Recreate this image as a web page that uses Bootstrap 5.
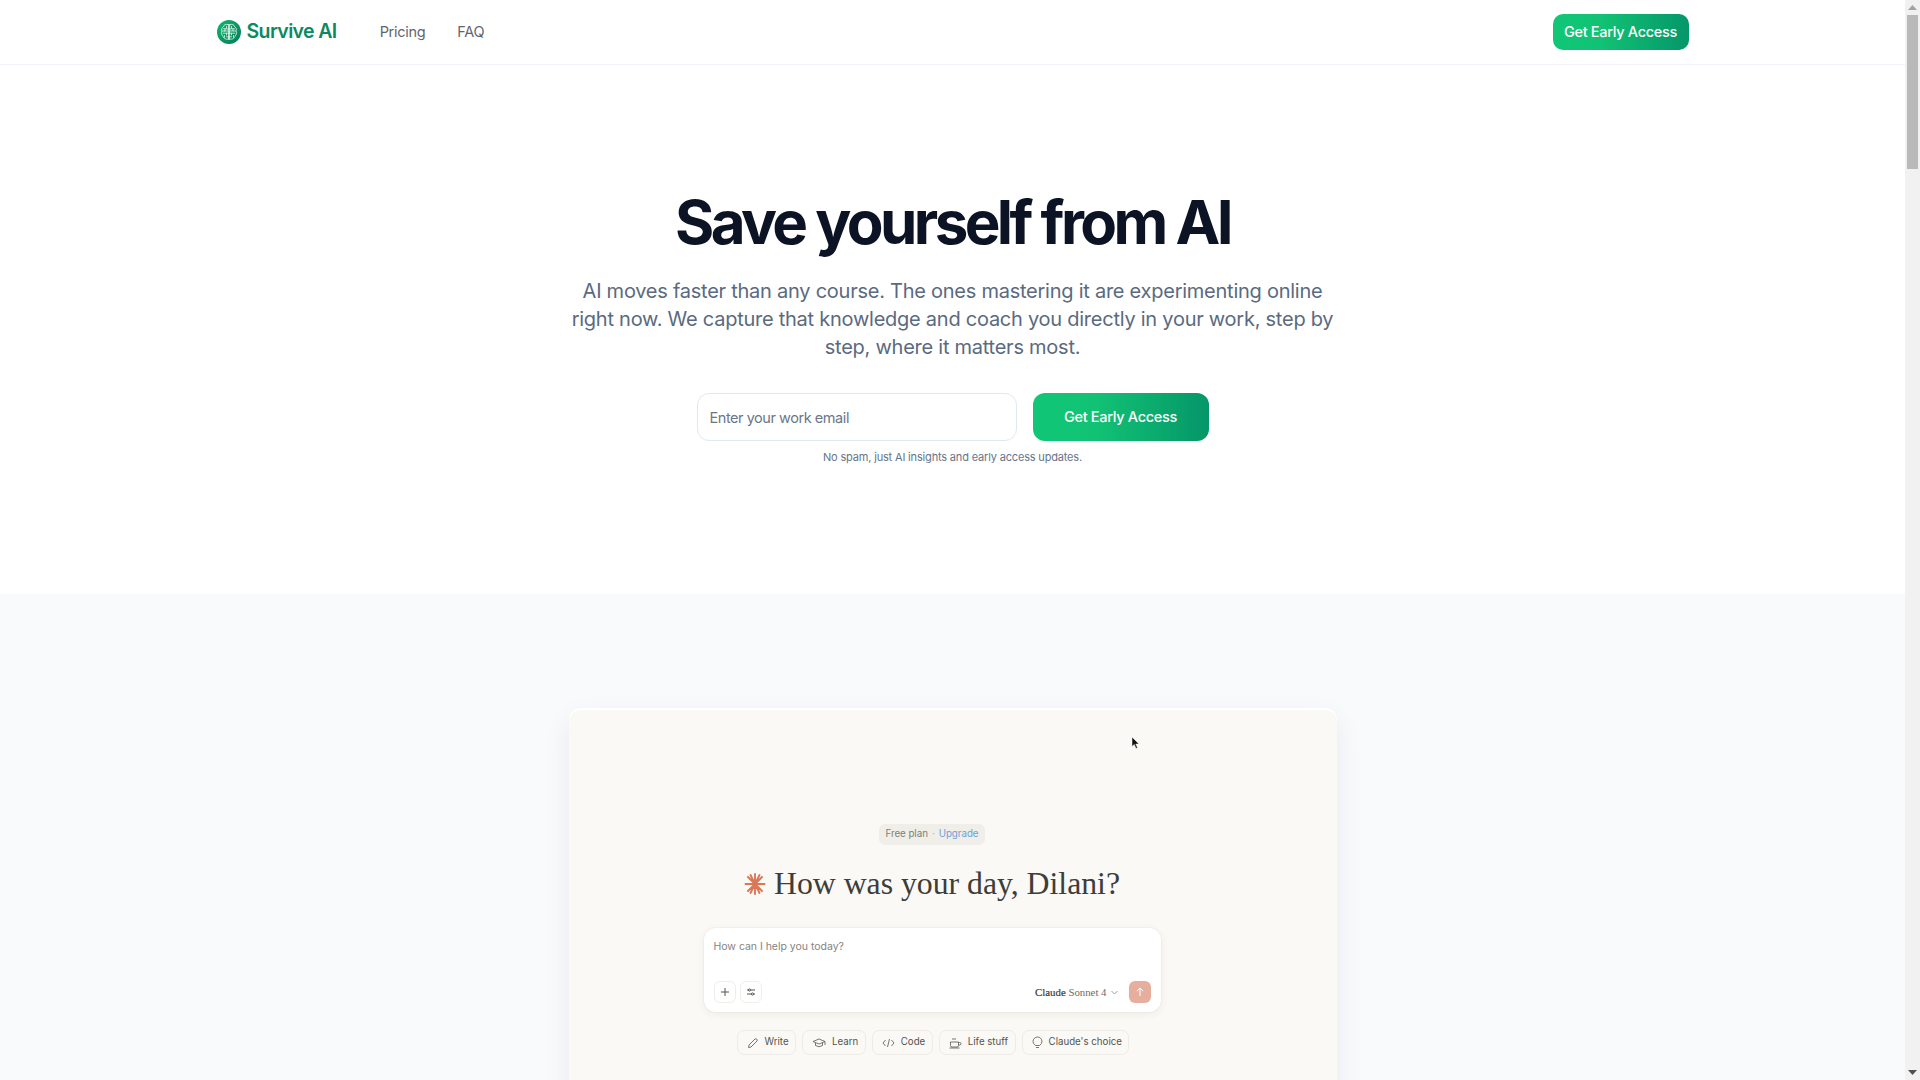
<!DOCTYPE html>
<html lang="en">
<head>
<meta charset="utf-8">
<title>Survive AI</title>
<link href="https://cdn.jsdelivr.net/npm/bootstrap@5.3.0/dist/css/bootstrap.min.css" rel="stylesheet">
<style>
body{font-family:Inter,"Liberation Sans",sans-serif;color:#0f172a;background:#fff;padding-right:15px}
.rail{position:fixed;top:0;right:0;bottom:0;width:15px;background:#f1f1f1;z-index:10}
.rail-thumb{width:11px;height:154px;margin:0 auto;background:#b9b9b9}
.rail-end{height:15px}
.topbar{height:65px;border-bottom:1px solid #f1f5f9;background:#fff;padding:0}
.topbar-in{max-width:1536px;padding:0 32px;margin:0 auto;width:100%;height:64px}
.brand-wrap{gap:6px}
.brand-name{font-size:19.5px;font-weight:600;color:#0b8a60;letter-spacing:-.62px}
.nav-lnk{font-size:14.5px;color:#5f6672;text-decoration:none;letter-spacing:-.3px}
.grad-btn{background:linear-gradient(90deg,#10c777 0%,#12c274 35%,#059669 100%);color:#fff;border:0;font-weight:450;letter-spacing:-.3px;font-size:14.5px;padding:0}
.grad-btn:hover{color:#fff}
.btn-top{height:36px;width:136px;border-radius:10px}
.hero{height:529px;padding-top:124px}
.hero-title{font-size:60px;font-weight:700;line-height:1.1;letter-spacing:-3.55px;color:#0b1324;margin:0}
.hero-copy{width:768px;font-size:20px;line-height:28px;color:#5a6a80;margin:22px auto 0;letter-spacing:-.25px}
.mail-row{margin-top:32px}
.mail-input{width:320px;height:48px;border:1px solid #e2e8f0;border-radius:12px;font-size:14.5px;padding:0 12px;letter-spacing:-.45px;color:#64748b}
.mail-input::placeholder{color:#6b7688;opacity:1}
.btn-big{width:176px;height:48px;border-radius:12px}
.fine{font-size:11px;color:#677489;margin:8px 0 0;letter-spacing:-.17px;line-height:16px}
.lower{background:#f8fafc;padding-top:116px;padding-bottom:96px}
.shot{width:768px;height:560px;margin:0 auto;background:#faf9f5;border-radius:12px;box-shadow:0 -2px 0 #fff,0 8px 28px rgba(15,23,42,.07);position:relative;padding:114px 0 0 135px}
.shot-col{width:457px}
.plan{height:21px;width:106px;background:#efeee8;border-radius:6px;font-size:9.8px;color:#7f7e78;letter-spacing:-.05px}
.plan a{color:#6f9fd8;text-decoration:none}
.plan i{font-style:normal;color:#b5b4ae;margin:0 4px}
.greet{font-family:"Liberation Serif",serif;font-size:31.8px;line-height:38px;color:#3d3d3a;margin:20px 0 0;letter-spacing:-.03px;font-weight:400}
.greet svg{margin-right:8px}
.ask{height:84px;width:457px;background:#fff;border-radius:12px;box-shadow:0 2px 8px rgba(60,50,30,.07),0 0 0 1px rgba(60,50,30,.03);padding:12px 10px 9px 10px;margin-top:25px}
.ask-text{font-size:10.5px;color:#85847f;line-height:14px;letter-spacing:-.02px}
.sq{width:22px;height:22px;border:1px solid #efeee9;border-radius:6px;background:#fff}
.model{font-family:"Liberation Serif",serif;font-size:10.8px;color:#6d6c67;margin-right:11px}
.model b{color:#3d3d3a;font-weight:400;-webkit-text-stroke:.2px #3d3d3a}
.send{width:22px;height:22px;border-radius:6px;background:#e6ae9c}
.chips{margin-top:18px;margin-left:33px;gap:6px}
.chip{height:25px;border:1px solid #edece6;border-radius:7px;font-size:9.7px;color:#55544f;padding:0 6.5px 0 9px;gap:6px;white-space:nowrap;background:#faf9f5}
.ptr{position:absolute;left:562px;top:26px}
</style>
</head>
<body>
<nav class="navbar topbar">
  <div class="topbar-in d-flex align-items-center">
    <a href="#" class="brand-wrap d-flex align-items-center text-decoration-none">
      <svg width="24" height="24" viewBox="0 0 24 24">
        <defs><linearGradient id="lg" x1="0" y1="0" x2="1" y2="1"><stop offset="0" stop-color="#12b870"/><stop offset="1" stop-color="#047a58"/></linearGradient></defs>
        <circle cx="12" cy="12" r="12" fill="url(#lg)"/>
        <g fill="none" stroke="#e6f7ef" stroke-width=".8" stroke-linecap="round" stroke-linejoin="round">
          <path d="M11.500 4.500v15M12.600 4.500v15"/>
          <path d="M11.300 4.700C9 3.700 6.700 4.800 6.300 6.800 4.700 7.500 4.100 9.800 5 11 3.900 12.500 4.300 15 5.900 15.800 6.300 18.200 9 20 11.300 19"/>
          <path d="M12.800 4.700C15 3.700 17.300 4.800 17.700 6.800 19.300 7.500 19.900 9.800 19 11 20.100 12.500 19.700 15 18.100 15.800 17.700 18.200 15 20 12.800 19"/>
          <path d="M6.500 8.800H9.500V6.500M8 8.800v2.200H5.500M11.500 9H10M6 13.200H9.500V15M9.500 13.200h2M7.500 15.500V17.300M9.500 16.800h2M14.500 6.500V8.800h3M16 8.800v2.200h2.500M12.600 9H14M18 13.200H14.500V15M14.500 13.200h-2M16.500 15.500V17.300M14.500 16.800h-2M7.500 11h3.800M12.700 11h3"/>
        </g>
      </svg>
      <span class="brand-name">Survive AI</span>
    </a>
    <div class="d-flex align-items-center" style="margin-left:43px;gap:32px">
      <a class="nav-lnk" href="#">Pricing</a>
      <a class="nav-lnk" href="#">FAQ</a>
    </div>
    <button class="btn grad-btn btn-top ms-auto">Get Early Access</button>
  </div>
</nav>
<main>
  <section class="hero text-center">
    <h1 class="hero-title">Save yourself from AI</h1>
    <p class="hero-copy">AI moves faster than any course. The ones mastering it are experimenting online right now. We capture that knowledge and coach you directly in your work, step by step, where it matters most.</p>
    <div class="mail-row d-flex justify-content-center gap-3">
      <input class="form-control mail-input" type="email" placeholder="Enter your work email">
      <button class="btn grad-btn btn-big">Get Early Access</button>
    </div>
    <p class="fine">No spam, just AI insights and early access updates.</p>
  </section>
  <section class="lower">
    <div class="shot">
      <svg class="ptr" width="9" height="14" viewBox="0 0 9 14"><path d="M1 1v9.500l2.300-2 1.700 4 1.500-.7-1.700-3.800H8z" fill="#111" stroke="#fff" stroke-width=".5"/></svg>
      <div class="shot-col">
        <div class="d-flex justify-content-center"><div class="plan d-flex align-items-center justify-content-center"><span>Free plan</span><i>·</i><a href="#">Upgrade</a></div></div>
        <h2 class="greet d-flex align-items-center justify-content-center">
          <svg width="22" height="22" viewBox="0 0 22 22" stroke="#d97757" stroke-width="1.900" stroke-linecap="round"><path d="M11 1v20M1.500 11h19M4 4l14 14M18 4L4 18M6.500 2l9 18M15.500 2l-9 18"/></svg>
          How was your day, Dilani?
        </h2>
        <div class="ask d-flex flex-column justify-content-between">
          <div class="ask-text">How can I help you today?</div>
          <div class="d-flex align-items-center">
            <div class="sq d-flex align-items-center justify-content-center me-1"><svg width="10" height="10" viewBox="0 0 10 10" stroke="#55544f" fill="none"><path d="M5 1v8M1 5h8"/></svg></div>
            <div class="sq d-flex align-items-center justify-content-center"><svg width="10" height="10" viewBox="0 0 10 10" stroke="#55544f" fill="none"><path d="M1 3h8M1 7h8"/><circle cx="3.500" cy="3" r="1.100" fill="#fff"/><circle cx="6.500" cy="7" r="1.100" fill="#fff"/></svg></div>
            <div class="model ms-auto d-flex align-items-center"><span><b>Claude</b> Sonnet 4</span><svg class="ms-1" width="7" height="5" viewBox="0 0 7 5" fill="none" stroke="#85847f" stroke-width=".8"><path d="M.5 1l3 3 3-3"/></svg></div>
            <div class="send d-flex align-items-center justify-content-center"><svg width="10" height="10" viewBox="0 0 10 10" stroke="#fff" fill="none" stroke-width="1"><path d="M5 9V1M1.800 4.200L5 1l3.200 3.200"/></svg></div>
          </div>
        </div>
        <div class="chips d-inline-flex">
          <div class="chip d-flex align-items-center"><svg width="12" height="12" viewBox="0 0 12 12" fill="none" stroke="#55544f" stroke-width=".8"><path d="M2 8L8 2q1-.6 1.800.2T10 4L4 10l-2.500.6z"/></svg>Write</div>
          <div class="chip d-flex align-items-center"><svg width="14" height="12" viewBox="0 0 14 12" fill="none" stroke="#55544f" stroke-width=".8"><path d="M1 4.500L7 2l6 2.500L7 7zM3.500 6v2.500Q7 11 10.500 8.500V6M13 4.500V8"/></svg>Learn</div>
          <div class="chip d-flex align-items-center"><svg width="13" height="10" viewBox="0 0 13 10" fill="none" stroke="#55544f" stroke-width=".8"><path d="M3.500 2L1 5l2.500 3M9.500 2L12 5 9.500 8M7.500 1L5.500 9"/></svg>Code</div>
          <div class="chip d-flex align-items-center"><svg width="13" height="12" viewBox="0 0 13 12" fill="none" stroke="#55544f" stroke-width=".8"><path d="M1.500 5h8v3.500q0 1.500-1.500 1.500H3q-1.500 0-1.500-1.500zM9.500 5.500h1.200q1.300 0 1.300 1.200t-1.300 1.300H9.500M.5 11h10M4 1v2M6 1v2"/></svg>Life stuff</div>
          <div class="chip d-flex align-items-center"><svg width="11" height="13" viewBox="0 0 11 13" fill="none" stroke="#55544f" stroke-width=".8"><path d="M3.500 9.500Q1 7.500 1 5.500a4.500 4.500 0 0 1 9 0q0 2-2.500 4zM4 11.500h3"/></svg>Claude's choice</div>
        </div>
      </div>
    </div>
  </section>
</main>
<div class="rail d-flex flex-column justify-content-start">
  <div class="rail-end d-flex align-items-center justify-content-center"><svg width="9" height="5" viewBox="0 0 9 5"><path d="M4.500 0L9 5H0z" fill="#a3a3a3"/></svg></div>
  <div class="rail-thumb"></div>
  <div class="rail-end d-flex align-items-center justify-content-center mt-auto"><svg width="9" height="5" viewBox="0 0 9 5"><path d="M0 0H9L4.500 5z" fill="#505050"/></svg></div>
</div>
<script src="https://cdn.jsdelivr.net/npm/bootstrap@5.3.0/dist/js/bootstrap.bundle.min.js"></script>
</body>
</html>
